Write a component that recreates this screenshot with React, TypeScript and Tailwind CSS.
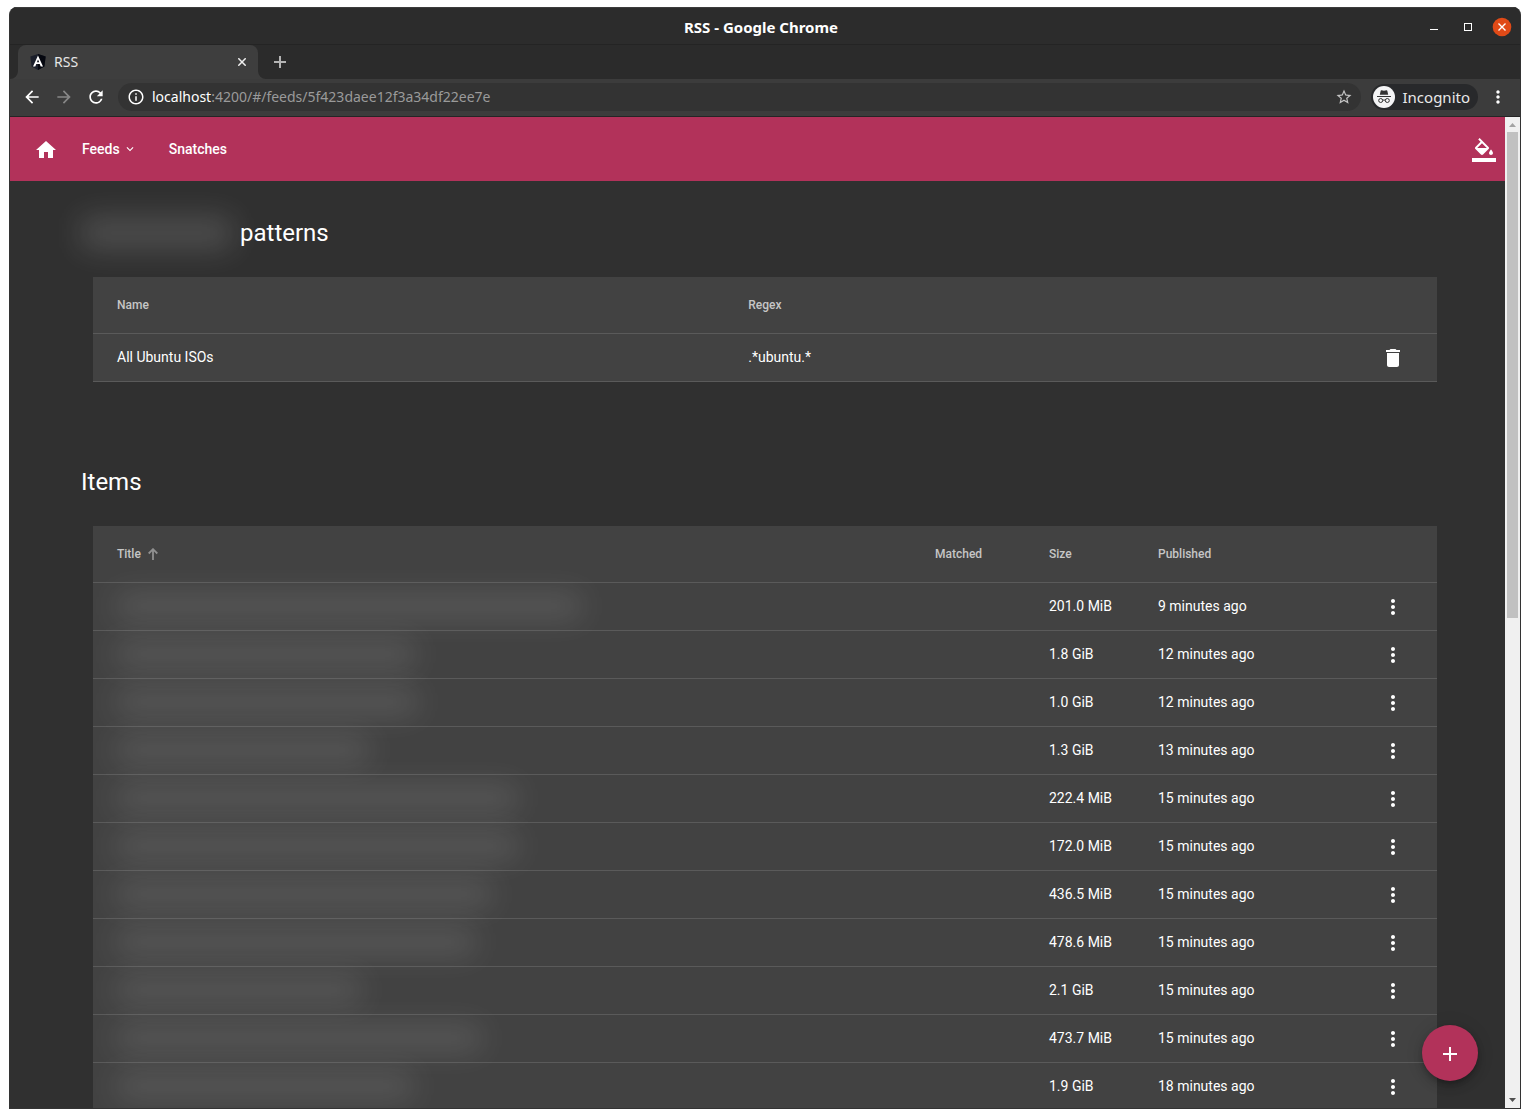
import React from "react";
import {
  MdAdd,
  MdArrowBack,
  MdArrowForward,
  MdDelete,
  MdExpandMore,
  MdHome,
  MdInfoOutline,
  MdMoreVert,
  MdRefresh,
  MdStarBorder,
} from "react-icons/md";

const patterns = [{ name: "All Ubuntu ISOs", regex: ".*ubuntu.*" }];

const items = [
  { titleWidth: 464, size: "201.0 MiB", published: "9 minutes ago" },
  { titleWidth: 298, size: "1.8 GiB", published: "12 minutes ago" },
  { titleWidth: 300, size: "1.0 GiB", published: "12 minutes ago" },
  { titleWidth: 252, size: "1.3 GiB", published: "13 minutes ago" },
  { titleWidth: 400, size: "222.4 MiB", published: "15 minutes ago" },
  { titleWidth: 400, size: "172.0 MiB", published: "15 minutes ago" },
  { titleWidth: 374, size: "436.5 MiB", published: "15 minutes ago" },
  { titleWidth: 358, size: "478.6 MiB", published: "15 minutes ago" },
  { titleWidth: 244, size: "2.1 GiB", published: "15 minutes ago" },
  { titleWidth: 364, size: "473.7 MiB", published: "15 minutes ago" },
  { titleWidth: 296, size: "1.9 GiB", published: "18 minutes ago" },
];

function AngularLogo() {
  return (
    <svg viewBox="0 0 16 16" className="size-4" aria-hidden="true">
      <path d="M8 0 15.6 2.6 14.4 12.4 8 16 1.6 12.4.4 2.6Z" fill="#1b1f2b" />
      <path d="M8 0 15.6 2.6 14.4 12.4 8 16Z" fill="#05070f" />
      <path
        d="M8 1.500 3 12.400h2.300l1-2.400h3.400l1 2.400H13L8 1.500Zm0 4 1.200 2.700H6.800L8 5.500Z"
        fill="#fff"
      />
    </svg>
  );
}

function IncognitoIcon() {
  return (
    <svg viewBox="0 0 22 22" className="size-[22px]" aria-hidden="true">
      <circle cx="11" cy="11" r="11" fill="#f4f4f5" />
      <path d="M8.600 4.200 11 4.700l2.400-.5c.5-.1.8.2.9.6l.9 3.900H6.800l.9-3.900c.1-.4.4-.7.9-.6Z" fill="#333" />
      <path d="M4 10h14v1H4z" fill="#333" />
      <g fill="none" stroke="#333" strokeWidth="1">
        <circle cx="7.700" cy="14.500" r="2" />
        <circle cx="14.300" cy="14.500" r="2" />
        <path d="M9.700 14.400q1.300-1 2.600 0" />
      </g>
    </svg>
  );
}

function FillIcon() {
  return (
    <svg viewBox="0 0 24 24" className="size-6" fill="currentColor" aria-hidden="true">
      <path d="M16.56 8.94 7.62 0 6.21 1.41l2.38 2.38-5.15 5.15c-.59.59-.59 1.54 0 2.12l5.5 5.5c.29.29.68.44 1.06.44s.77-.15 1.06-.44l5.5-5.5c.59-.58.59-1.53 0-2.12zM5.21 10 10 5.21 14.79 10H5.21zM19 11.500s-2 2.170-2 3.500c0 1.100.9 2 2 2s2-.9 2-2c0-1.330-2-3.500-2-3.500z" />
      <path d="M0 20h24v4H0z" />
    </svg>
  );
}

function TitleBar() {
  return (
    <header className="grid h-[38px] shrink-0 grid-cols-[1fr_auto_1fr] items-center border-t border-b border-t-[#3c3c3c] border-b-[#242424] bg-[#2c2c2c] pt-px pr-2 font-['Noto_Sans',sans-serif]">
      <span />
      <span className="text-[15px] leading-5 font-bold text-white">RSS - Google Chrome</span>
      <div className="flex items-center justify-end gap-3.5 text-white">
        <button aria-label="Minimize" className="flex size-5 items-center justify-center">
          <svg viewBox="0 0 20 20" className="size-5" aria-hidden="true">
            <path d="M6 12h8v1H6z" fill="currentColor" />
          </svg>
        </button>
        <button aria-label="Maximize" className="flex size-5 items-center justify-center">
          <span className="size-2 border border-white" />
        </button>
        <button aria-label="Close window" className="flex size-5 items-center justify-center">
          <svg viewBox="0 0 20 20" className="size-5" aria-hidden="true">
            <circle cx="10" cy="10" r="9.300" fill="#e04a17" />
            <path d="m6.500 6.500 7 7m0-7-7 7" stroke="currentColor" strokeWidth="1.400" />
          </svg>
        </button>
      </div>
    </header>
  );
}

function TabStrip() {
  return (
    <div className="flex h-[34px] shrink-0 bg-[#2b2b2b] pl-2 font-['Noto_Sans',sans-serif]">
      <div className="relative flex w-60 items-center rounded-t-lg bg-[#3e3e3e] pr-2 pl-3">
        <svg viewBox="0 0 8 8" className="absolute bottom-0 -left-2 size-2" aria-hidden="true">
          <path d="M8 0v8H0a8 8 0 0 0 8-8Z" fill="#3e3e3e" />
        </svg>
        <svg viewBox="0 0 8 8" className="absolute -right-2 bottom-0 size-2" aria-hidden="true">
          <path d="M0 0v8h8a8 8 0 0 1-8-8Z" fill="#3e3e3e" />
        </svg>
        <AngularLogo />
        <span className="ml-2 flex-1 text-sm text-[#e6e6e6]">RSS</span>
        <button aria-label="Close tab" className="flex size-4 items-center justify-center text-[#f0f0f0]">
          <svg viewBox="0 0 8 8" className="size-2" aria-hidden="true">
            <path d="m.3.300 7.400 7.400m0-7.400L.3 7.700" stroke="currentColor" strokeWidth="1.500" />
          </svg>
        </button>
      </div>
      <button aria-label="New tab" className="ml-3 flex w-5 items-center justify-center text-[#b4b4b4]">
        <svg viewBox="0 0 12 12" className="size-3" aria-hidden="true">
          <path d="M6 0v12M0 6h12" stroke="currentColor" strokeWidth="2" />
        </svg>
      </button>
    </div>
  );
}

function Toolbar() {
  return (
    <div className="flex h-[38px] shrink-0 items-center border-b border-[#252525] bg-[#3c3c3c] px-3 pb-px font-['Noto_Sans',sans-serif] text-white">
      <button aria-label="Back">
        <MdArrowBack className="size-5" />
      </button>
      <button aria-label="Forward" className="ml-3 text-[#868686]">
        <MdArrowForward className="size-5" />
      </button>
      <button aria-label="Reload" className="ml-3">
        <MdRefresh className="size-5" />
      </button>
      <div className="ml-3 flex h-7 flex-1 items-center rounded-full bg-[#333] px-2">
        <MdInfoOutline className="size-5 scale-90" />
        <div role="textbox" aria-label="Address" className="ml-1.5 flex-1 text-sm text-[#9a9a9a]">
          <span className="text-white">localhost</span>:4200/#/feeds/5f423daee12f3a34df22ee7e
        </div>
        <button aria-label="Bookmark this page" className="text-[#c4c4c4]">
          <MdStarBorder className="size-[18px]" />
        </button>
      </div>
      <div className="ml-2.5 flex h-[26px] items-center rounded-full bg-[#28292b] pr-2 pl-0.5">
        <IncognitoIcon />
        <span className="ml-2 text-[15px] leading-5 text-[#e8e8e8]">Incognito</span>
      </div>
      <button aria-label="Browser menu" className="ml-2.5">
        <MdMoreVert className="size-5" />
      </button>
    </div>
  );
}

function AppBar() {
  return (
    <nav className="flex h-16 shrink-0 items-center bg-[#b2325a] pr-[9px] pl-6 text-sm font-medium text-white">
      <a href="#/" aria-label="Home" className="pt-0.5">
        <MdHome className="size-6" />
      </a>
      <button className="ml-6 flex items-center gap-[3px]">
        Feeds
        <MdExpandMore className="size-3.5" />
      </button>
      <a href="#/snatches" className="ml-8">
        Snatches
      </a>
      <button aria-label="Change theme" className="ml-auto pt-0.5">
        <FillIcon />
      </button>
    </nav>
  );
}

const headCell = "h-[57px] border-b border-[#5a5a5a] p-0 text-left text-xs font-medium text-[#c6c6c6]";
const bodyCell = "h-12 border-b border-[#5a5a5a] p-0 text-sm text-white";
const textCell = "h-12 border-b border-[#5a5a5a] p-0 pb-0.5 text-sm text-white";

function PatternsTable() {
  return (
    <table className="w-full table-fixed border-separate border-spacing-0 bg-[#424242]">
      <colgroup>
        <col className="w-[48.75%]" />
        <col />
        <col className="w-20" />
      </colgroup>
      <thead>
        <tr>
          <th scope="col" className={headCell}>
            <span className="pl-6">Name</span>
          </th>
          <th scope="col" className={headCell}>
            Regex
          </th>
          <td className={headCell} />
        </tr>
      </thead>
      <tbody>
        {patterns.map((pattern) => (
          <tr key={pattern.name}>
            <td className={textCell}>
              <span className="pl-6">{pattern.name}</span>
            </td>
            <td className={textCell}>{pattern.regex}</td>
            <td className={bodyCell}>
              <button aria-label={`Delete ${pattern.name}`} className="ml-auto mr-6 flex size-10 items-center justify-center">
                <MdDelete className="size-6" />
              </button>
            </td>
          </tr>
        ))}
      </tbody>
    </table>
  );
}

function ItemsTable() {
  return (
    <table className="w-full table-fixed border-separate border-spacing-0 bg-[#424242]">
      <colgroup>
        <col />
        <col className="w-[114px]" />
        <col className="w-[109px]" />
        <col className="w-[199px]" />
        <col className="w-20" />
      </colgroup>
      <thead>
        <tr>
          <th scope="col" aria-sort="ascending" className={headCell}>
            <button className="flex items-center gap-[7px] pl-6">
              Title
              <svg viewBox="0 0 10 12" className="h-3 w-2.5 text-[#909090]" aria-hidden="true">
                <path d="M5 12V1.500M.7 5.500 5 1.200l4.300 4.300" fill="none" stroke="currentColor" strokeWidth="1.800" />
              </svg>
            </button>
          </th>
          <th scope="col" className={headCell}>
            Matched
          </th>
          <th scope="col" className={headCell}>
            Size
          </th>
          <th scope="col" className={headCell}>
            Published
          </th>
          <td className={headCell} />
        </tr>
      </thead>
      <tbody>
        {items.map((item, index) => (
          <tr key={index}>
            <td className={textCell}>
              <div className="ml-6 h-6 rounded bg-white/13 blur-[15px]" style={{ width: item.titleWidth }} />
            </td>
            <td className={textCell} />
            <td className={textCell}>{item.size}</td>
            <td className={textCell}>{item.published}</td>
            <td className={bodyCell}>
              <button aria-label="Item actions" className="ml-auto mr-6 flex size-10 items-center justify-center">
                <MdMoreVert className="size-6" />
              </button>
            </td>
          </tr>
        ))}
      </tbody>
    </table>
  );
}

function Scrollbar() {
  return (
    <div className="flex w-[15px] shrink-0 flex-col items-center bg-[#f0f0f0]" aria-hidden="true">
      <svg viewBox="0 0 15 15" className="size-[15px]">
        <path d="M4 10h7L7.500 6Z" fill="#a3a3a3" />
      </svg>
      <div className="h-[49%] w-[11px] bg-[#c1c1c1]" />
      <svg viewBox="0 0 15 15" className="mt-auto size-[15px]">
        <path d="M4 5h7L7.500 9Z" fill="#505050" />
      </svg>
    </div>
  );
}

export default function App() {
  return (
    <div className="h-screen bg-white px-[9px] pt-[7px] pb-[9px]">
      <div className="flex h-full flex-col overflow-hidden rounded-t-lg border-x border-b border-[#333] bg-[#303030]">
        <TitleBar />
        <TabStrip />
        <Toolbar />
        <div className="flex min-h-0 flex-1 font-[Roboto,sans-serif]">
          <div className="relative min-w-0 flex-1 overflow-hidden bg-[#303030]">
            <AppBar />
            <main className="pr-14 pl-[71px] text-white">
              <section className="pt-9">
                <h1 className="flex items-center text-2xl leading-8">
                  <span className="mr-2 h-8 w-[151px] rounded bg-white/15 blur-[15px]" />
                  patterns
                </h1>
                <div className="mx-3 mt-7">
                  <PatternsTable />
                </div>
              </section>
              <section className="pt-[84px]">
                <h1 className="text-2xl leading-8">Items</h1>
                <div className="mx-3 mt-7">
                  <ItemsTable />
                </div>
              </section>
            </main>
            <button
              aria-label="Add pattern"
              className="absolute right-[27px] bottom-[27px] flex size-14 items-center justify-center rounded-full bg-[#b2325a] pt-0.5 text-white shadow-[0_3px_5px_-1px_rgba(0,0,0,0.2),0_6px_10px_rgba(0,0,0,0.14),0_1px_18px_rgba(0,0,0,0.12)]"
            >
              <MdAdd className="size-6" />
            </button>
          </div>
          <Scrollbar />
        </div>
      </div>
    </div>
  );
}
